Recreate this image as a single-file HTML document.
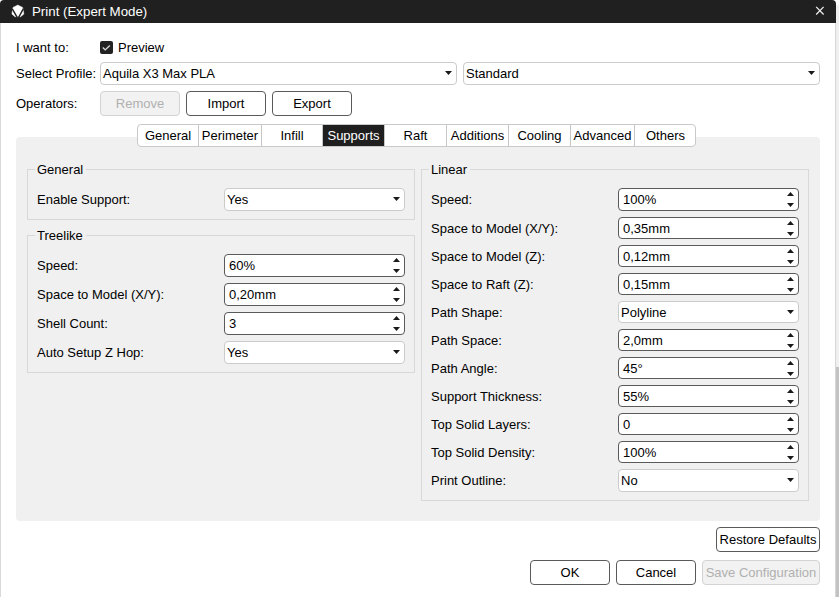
<!DOCTYPE html>
<html><head><meta charset="utf-8"><style>
html,body{margin:0;padding:0;width:839px;height:597px;overflow:hidden;background:#ffffff;position:relative;font-family:"Liberation Sans", sans-serif;font-size:13px}
.t{position:absolute;white-space:pre;font-family:"Liberation Sans", sans-serif}
</style></head><body>
<div style="position:absolute;left:835px;top:0px;width:4px;height:597px;box-sizing:border-box;background:#efefef"></div>
<div style="position:absolute;left:835px;top:0px;width:4px;height:5px;box-sizing:border-box;background:#ffffff"></div>
<div style="position:absolute;left:836px;top:367px;width:3px;height:230px;box-sizing:border-box;background:#c3c3c3"></div>
<div style="position:absolute;left:0px;top:23px;width:836px;height:574px;box-sizing:border-box;background:#fff;border-left:1px solid #d9d9d9;border-right:1px solid #d6d6d6"></div>
<div style="position:absolute;left:0px;top:0px;width:836px;height:23px;box-sizing:border-box;background:#202020;border-radius:4px 4px 0 0"></div>
<svg style="position:absolute;left:8px;top:2px" width="20" height="18" viewBox="0 0 20 18"><path d="M9.8 3.1 L14.6 5.4 L15.9 12 L12.6 14.7 L7 14.7 L3.9 12 L5 5.4 Z" fill="#fff" stroke="#fff" stroke-width="0.5" stroke-linejoin="round"/><path d="M4.3 6.9 L9.3 15.6 M15.3 6.9 L10.5 15.6" fill="none" stroke="#202020" stroke-width="1.4"/></svg>
<div class="t" style="left:32px;top:2.09px;height:20px;line-height:20px;font-size:13.3px;color:#fff;">Print (Expert Mode)</div>
<svg style="position:absolute;left:815px;top:6px" width="10" height="10" viewBox="0 0 10 10"><path d="M1.2 0.9L8.6 8.5M8.6 0.9L1.2 8.5" stroke="#ececec" stroke-width="1.3"/></svg>
<div class="t" style="left:16px;top:37.80px;height:20px;line-height:20px;font-size:13px;color:#000;">I want to:</div>
<div style="position:absolute;left:100px;top:41px;width:13px;height:13px;box-sizing:border-box;background:#222;border-radius:2px"></div>
<svg style="position:absolute;left:100px;top:41px" width="13" height="13" viewBox="0 0 13 13"><path d="M2.8 6.6L5.2 8.9L9.8 4.5" fill="none" stroke="#d8d8d8" stroke-width="1.4"/></svg>
<div class="t" style="left:118px;top:37.50px;height:20px;line-height:20px;font-size:13px;color:#000;">Preview</div>
<div class="t" style="left:16px;top:63.50px;height:20px;line-height:20px;font-size:13px;color:#000;">Select Profile:</div>
<div style="position:absolute;left:100px;top:62px;width:357px;height:23px;box-sizing:border-box;background:#fff;border:1px solid #cbcbcb;border-radius:4px"></div><div class="t" style="left:103px;top:63.50px;height:20px;line-height:20px;font-size:13px;color:#000;">Aquila X3 Max PLA</div><svg style="position:absolute;left:444.50px;top:71.00px" width="7" height="4"><path d="M0 0H7L3.5 4Z" fill="#1a1a1a"/></svg>
<div style="position:absolute;left:463px;top:62px;width:357px;height:23px;box-sizing:border-box;background:#fff;border:1px solid #cbcbcb;border-radius:4px"></div><div class="t" style="left:466px;top:63.50px;height:20px;line-height:20px;font-size:13px;color:#000;">Standard</div><svg style="position:absolute;left:807.50px;top:71.00px" width="7" height="4"><path d="M0 0H7L3.5 4Z" fill="#1a1a1a"/></svg>
<div class="t" style="left:16px;top:94.10px;height:20px;line-height:20px;font-size:13px;color:#000;">Operators:</div>
<div style="position:absolute;left:100px;top:91px;width:80px;height:25px;box-sizing:border-box;background:#f2f2f2;border:1px solid #d3d3d3;border-radius:4px"></div><div class="t" style="left:100px;top:94.00px;width:80px;height:20px;line-height:20px;text-align:center;color:#b0b0b0">Remove</div>
<div style="position:absolute;left:186px;top:91px;width:80px;height:25px;box-sizing:border-box;background:#fff;border:1px solid #5a5a5a;border-radius:4px"></div><div class="t" style="left:186px;top:94.00px;width:80px;height:20px;line-height:20px;text-align:center;color:#000">Import</div>
<div style="position:absolute;left:272px;top:91px;width:80px;height:25px;box-sizing:border-box;background:#fff;border:1px solid #5a5a5a;border-radius:4px"></div><div class="t" style="left:272px;top:94.00px;width:80px;height:20px;line-height:20px;text-align:center;color:#000">Export</div>
<div style="position:absolute;left:16px;top:137px;width:804px;height:384px;box-sizing:border-box;background:#f0f0f0;border-radius:4px"></div>
<div style="position:absolute;left:137px;top:124px;width:559px;height:23px;box-sizing:border-box;background:#fff;border:1px solid #c9c9c9;border-radius:4px"></div>
<div class="t" style="left:138px;top:124.5px;width:60px;height:21px;line-height:21px;text-align:center;color:#000">General</div>
<div style="position:absolute;left:198px;top:125px;width:1px;height:21px;box-sizing:border-box;background:#c6c6c6"></div>
<div class="t" style="left:199px;top:124.5px;width:62px;height:21px;line-height:21px;text-align:center;color:#000">Perimeter</div>
<div style="position:absolute;left:261px;top:125px;width:1px;height:21px;box-sizing:border-box;background:#c6c6c6"></div>
<div class="t" style="left:262px;top:124.5px;width:60px;height:21px;line-height:21px;text-align:center;color:#000">Infill</div>
<div style="position:absolute;left:322px;top:125px;width:1px;height:21px;box-sizing:border-box;background:#c6c6c6"></div>
<div style="position:absolute;left:323px;top:125px;width:61px;height:21px;box-sizing:border-box;background:#1f1f1f"></div>
<div class="t" style="left:323px;top:124.5px;width:61px;height:21px;line-height:21px;text-align:center;color:#fff">Supports</div>
<div style="position:absolute;left:384px;top:125px;width:1px;height:21px;box-sizing:border-box;background:#c6c6c6"></div>
<div class="t" style="left:385px;top:124.5px;width:61px;height:21px;line-height:21px;text-align:center;color:#000">Raft</div>
<div style="position:absolute;left:446px;top:125px;width:1px;height:21px;box-sizing:border-box;background:#c6c6c6"></div>
<div class="t" style="left:447px;top:124.5px;width:61px;height:21px;line-height:21px;text-align:center;color:#000">Additions</div>
<div style="position:absolute;left:508px;top:125px;width:1px;height:21px;box-sizing:border-box;background:#c6c6c6"></div>
<div class="t" style="left:509px;top:124.5px;width:61px;height:21px;line-height:21px;text-align:center;color:#000">Cooling</div>
<div style="position:absolute;left:570px;top:125px;width:1px;height:21px;box-sizing:border-box;background:#c6c6c6"></div>
<div class="t" style="left:571px;top:124.5px;width:63px;height:21px;line-height:21px;text-align:center;color:#000">Advanced</div>
<div style="position:absolute;left:634px;top:125px;width:1px;height:21px;box-sizing:border-box;background:#c6c6c6"></div>
<div class="t" style="left:635px;top:124.5px;width:61px;height:21px;line-height:21px;text-align:center;color:#000">Others</div>
<div style="position:absolute;left:27px;top:169px;width:388px;height:51px;box-sizing:border-box;border:1px solid #d8d8d8"></div><div class="t" style="left:35px;top:159.50px;height:20px;line-height:20px;padding:0 3px 0 2px;background:#f0f0f0;color:#000">General</div>
<div style="position:absolute;left:27px;top:235px;width:388px;height:138px;box-sizing:border-box;border:1px solid #d8d8d8"></div><div class="t" style="left:35px;top:225.50px;height:20px;line-height:20px;padding:0 3px 0 2px;background:#f0f0f0;color:#000">Treelike</div>
<div style="position:absolute;left:421px;top:169px;width:388px;height:332px;box-sizing:border-box;border:1px solid #d8d8d8"></div><div class="t" style="left:429px;top:159.50px;height:20px;line-height:20px;padding:0 3px 0 2px;background:#f0f0f0;color:#000">Linear</div>
<div class="t" style="left:37px;top:189.50px;height:20px;line-height:20px;font-size:13px;color:#000;">Enable Support:</div>
<div style="position:absolute;left:224px;top:188px;width:181px;height:23px;box-sizing:border-box;background:#fff;border:1px solid #cbcbcb;border-radius:4px"></div><div class="t" style="left:227px;top:189.50px;height:20px;line-height:20px;font-size:13px;color:#000;">Yes</div><svg style="position:absolute;left:392.50px;top:197.00px" width="7" height="4"><path d="M0 0H7L3.5 4Z" fill="#1a1a1a"/></svg>
<div class="t" style="left:37px;top:255.50px;height:20px;line-height:20px;font-size:13px;color:#000;">Speed:</div>
<div style="position:absolute;left:224px;top:254px;width:181px;height:23px;box-sizing:border-box;background:#fff;border:1px solid #5a5a5a;border-radius:4px"></div><div class="t" style="left:229px;top:255.50px;height:20px;line-height:20px;font-size:13px;color:#000;">60%</div><svg style="position:absolute;left:393.00px;top:258.00px" width="7" height="4"><path d="M0 4H7L3.5 0Z" fill="#1a1a1a"/></svg><svg style="position:absolute;left:393.00px;top:269.00px" width="7" height="4"><path d="M0 0H7L3.5 4Z" fill="#1a1a1a"/></svg>
<div class="t" style="left:37px;top:284.50px;height:20px;line-height:20px;font-size:13px;color:#000;">Space to Model (X/Y):</div>
<div style="position:absolute;left:224px;top:283px;width:181px;height:23px;box-sizing:border-box;background:#fff;border:1px solid #5a5a5a;border-radius:4px"></div><div class="t" style="left:229px;top:284.50px;height:20px;line-height:20px;font-size:13px;color:#000;">0,20mm</div><svg style="position:absolute;left:393.00px;top:287.00px" width="7" height="4"><path d="M0 4H7L3.5 0Z" fill="#1a1a1a"/></svg><svg style="position:absolute;left:393.00px;top:298.00px" width="7" height="4"><path d="M0 0H7L3.5 4Z" fill="#1a1a1a"/></svg>
<div class="t" style="left:37px;top:313.50px;height:20px;line-height:20px;font-size:13px;color:#000;">Shell Count:</div>
<div style="position:absolute;left:224px;top:312px;width:181px;height:23px;box-sizing:border-box;background:#fff;border:1px solid #5a5a5a;border-radius:4px"></div><div class="t" style="left:229px;top:313.50px;height:20px;line-height:20px;font-size:13px;color:#000;">3</div><svg style="position:absolute;left:393.00px;top:316.00px" width="7" height="4"><path d="M0 4H7L3.5 0Z" fill="#1a1a1a"/></svg><svg style="position:absolute;left:393.00px;top:327.00px" width="7" height="4"><path d="M0 0H7L3.5 4Z" fill="#1a1a1a"/></svg>
<div class="t" style="left:37px;top:342.50px;height:20px;line-height:20px;font-size:13px;color:#000;">Auto Setup Z Hop:</div>
<div style="position:absolute;left:224px;top:341px;width:181px;height:23px;box-sizing:border-box;background:#fff;border:1px solid #cbcbcb;border-radius:4px"></div><div class="t" style="left:227px;top:342.50px;height:20px;line-height:20px;font-size:13px;color:#000;">Yes</div><svg style="position:absolute;left:392.50px;top:350.00px" width="7" height="4"><path d="M0 0H7L3.5 4Z" fill="#1a1a1a"/></svg>
<div class="t" style="left:431px;top:189.50px;height:20px;line-height:20px;font-size:13px;color:#000;">Speed:</div>
<div style="position:absolute;left:618px;top:188px;width:181px;height:23px;box-sizing:border-box;background:#fff;border:1px solid #5a5a5a;border-radius:4px"></div><div class="t" style="left:623px;top:189.50px;height:20px;line-height:20px;font-size:13px;color:#000;">100%</div><svg style="position:absolute;left:787.00px;top:192.00px" width="7" height="4"><path d="M0 4H7L3.5 0Z" fill="#1a1a1a"/></svg><svg style="position:absolute;left:787.00px;top:203.00px" width="7" height="4"><path d="M0 0H7L3.5 4Z" fill="#1a1a1a"/></svg>
<div class="t" style="left:431px;top:218.50px;height:20px;line-height:20px;font-size:13px;color:#000;">Space to Model (X/Y):</div>
<div style="position:absolute;left:618px;top:217px;width:181px;height:22px;box-sizing:border-box;background:#fff;border:1px solid #5a5a5a;border-radius:4px"></div><div class="t" style="left:623px;top:218.50px;height:20px;line-height:20px;font-size:13px;color:#000;">0,35mm</div><svg style="position:absolute;left:787.00px;top:220.50px" width="7" height="4"><path d="M0 4H7L3.5 0Z" fill="#1a1a1a"/></svg><svg style="position:absolute;left:787.00px;top:231.50px" width="7" height="4"><path d="M0 0H7L3.5 4Z" fill="#1a1a1a"/></svg>
<div class="t" style="left:431px;top:246.50px;height:20px;line-height:20px;font-size:13px;color:#000;">Space to Model (Z):</div>
<div style="position:absolute;left:618px;top:245px;width:181px;height:22px;box-sizing:border-box;background:#fff;border:1px solid #5a5a5a;border-radius:4px"></div><div class="t" style="left:623px;top:246.50px;height:20px;line-height:20px;font-size:13px;color:#000;">0,12mm</div><svg style="position:absolute;left:787.00px;top:248.50px" width="7" height="4"><path d="M0 4H7L3.5 0Z" fill="#1a1a1a"/></svg><svg style="position:absolute;left:787.00px;top:259.50px" width="7" height="4"><path d="M0 0H7L3.5 4Z" fill="#1a1a1a"/></svg>
<div class="t" style="left:431px;top:274.50px;height:20px;line-height:20px;font-size:13px;color:#000;">Space to Raft (Z):</div>
<div style="position:absolute;left:618px;top:273px;width:181px;height:22px;box-sizing:border-box;background:#fff;border:1px solid #5a5a5a;border-radius:4px"></div><div class="t" style="left:623px;top:274.50px;height:20px;line-height:20px;font-size:13px;color:#000;">0,15mm</div><svg style="position:absolute;left:787.00px;top:276.50px" width="7" height="4"><path d="M0 4H7L3.5 0Z" fill="#1a1a1a"/></svg><svg style="position:absolute;left:787.00px;top:287.50px" width="7" height="4"><path d="M0 0H7L3.5 4Z" fill="#1a1a1a"/></svg>
<div class="t" style="left:431px;top:302.50px;height:20px;line-height:20px;font-size:13px;color:#000;">Path Shape:</div>
<div style="position:absolute;left:618px;top:301px;width:181px;height:22px;box-sizing:border-box;background:#fff;border:1px solid #cbcbcb;border-radius:4px"></div><div class="t" style="left:621px;top:302.50px;height:20px;line-height:20px;font-size:13px;color:#000;">Polyline</div><svg style="position:absolute;left:786.50px;top:310.00px" width="7" height="4"><path d="M0 0H7L3.5 4Z" fill="#1a1a1a"/></svg>
<div class="t" style="left:431px;top:330.50px;height:20px;line-height:20px;font-size:13px;color:#000;">Path Space:</div>
<div style="position:absolute;left:618px;top:329px;width:181px;height:22px;box-sizing:border-box;background:#fff;border:1px solid #5a5a5a;border-radius:4px"></div><div class="t" style="left:623px;top:330.50px;height:20px;line-height:20px;font-size:13px;color:#000;">2,0mm</div><svg style="position:absolute;left:787.00px;top:332.50px" width="7" height="4"><path d="M0 4H7L3.5 0Z" fill="#1a1a1a"/></svg><svg style="position:absolute;left:787.00px;top:343.50px" width="7" height="4"><path d="M0 0H7L3.5 4Z" fill="#1a1a1a"/></svg>
<div class="t" style="left:431px;top:358.50px;height:20px;line-height:20px;font-size:13px;color:#000;">Path Angle:</div>
<div style="position:absolute;left:618px;top:357px;width:181px;height:22px;box-sizing:border-box;background:#fff;border:1px solid #5a5a5a;border-radius:4px"></div><div class="t" style="left:623px;top:358.50px;height:20px;line-height:20px;font-size:13px;color:#000;">45°</div><svg style="position:absolute;left:787.00px;top:360.50px" width="7" height="4"><path d="M0 4H7L3.5 0Z" fill="#1a1a1a"/></svg><svg style="position:absolute;left:787.00px;top:371.50px" width="7" height="4"><path d="M0 0H7L3.5 4Z" fill="#1a1a1a"/></svg>
<div class="t" style="left:431px;top:386.50px;height:20px;line-height:20px;font-size:13px;color:#000;">Support Thickness:</div>
<div style="position:absolute;left:618px;top:385px;width:181px;height:22px;box-sizing:border-box;background:#fff;border:1px solid #5a5a5a;border-radius:4px"></div><div class="t" style="left:623px;top:386.50px;height:20px;line-height:20px;font-size:13px;color:#000;">55%</div><svg style="position:absolute;left:787.00px;top:388.50px" width="7" height="4"><path d="M0 4H7L3.5 0Z" fill="#1a1a1a"/></svg><svg style="position:absolute;left:787.00px;top:399.50px" width="7" height="4"><path d="M0 0H7L3.5 4Z" fill="#1a1a1a"/></svg>
<div class="t" style="left:431px;top:414.50px;height:20px;line-height:20px;font-size:13px;color:#000;">Top Solid Layers:</div>
<div style="position:absolute;left:618px;top:413px;width:181px;height:22px;box-sizing:border-box;background:#fff;border:1px solid #5a5a5a;border-radius:4px"></div><div class="t" style="left:623px;top:414.50px;height:20px;line-height:20px;font-size:13px;color:#000;">0</div><svg style="position:absolute;left:787.00px;top:416.50px" width="7" height="4"><path d="M0 4H7L3.5 0Z" fill="#1a1a1a"/></svg><svg style="position:absolute;left:787.00px;top:427.50px" width="7" height="4"><path d="M0 0H7L3.5 4Z" fill="#1a1a1a"/></svg>
<div class="t" style="left:431px;top:442.50px;height:20px;line-height:20px;font-size:13px;color:#000;">Top Solid Density:</div>
<div style="position:absolute;left:618px;top:441px;width:181px;height:22px;box-sizing:border-box;background:#fff;border:1px solid #5a5a5a;border-radius:4px"></div><div class="t" style="left:623px;top:442.50px;height:20px;line-height:20px;font-size:13px;color:#000;">100%</div><svg style="position:absolute;left:787.00px;top:444.50px" width="7" height="4"><path d="M0 4H7L3.5 0Z" fill="#1a1a1a"/></svg><svg style="position:absolute;left:787.00px;top:455.50px" width="7" height="4"><path d="M0 0H7L3.5 4Z" fill="#1a1a1a"/></svg>
<div class="t" style="left:431px;top:470.50px;height:20px;line-height:20px;font-size:13px;color:#000;">Print Outline:</div>
<div style="position:absolute;left:618px;top:469px;width:181px;height:23px;box-sizing:border-box;background:#fff;border:1px solid #cbcbcb;border-radius:4px"></div><div class="t" style="left:621px;top:470.50px;height:20px;line-height:20px;font-size:13px;color:#000;">No</div><svg style="position:absolute;left:786.50px;top:478.00px" width="7" height="4"><path d="M0 0H7L3.5 4Z" fill="#1a1a1a"/></svg>
<div style="position:absolute;left:716px;top:527px;width:104px;height:25px;box-sizing:border-box;background:#fff;border:1px solid #5a5a5a;border-radius:4px"></div><div class="t" style="left:716px;top:530.00px;width:104px;height:20px;line-height:20px;text-align:center;color:#000">Restore Defaults</div>
<div style="position:absolute;left:530px;top:560px;width:80px;height:25px;box-sizing:border-box;background:#fff;border:1px solid #5a5a5a;border-radius:4px"></div><div class="t" style="left:530px;top:563.00px;width:80px;height:20px;line-height:20px;text-align:center;color:#000">OK</div>
<div style="position:absolute;left:616px;top:560px;width:80px;height:25px;box-sizing:border-box;background:#fff;border:1px solid #5a5a5a;border-radius:4px"></div><div class="t" style="left:616px;top:563.00px;width:80px;height:20px;line-height:20px;text-align:center;color:#000">Cancel</div>
<div style="position:absolute;left:702px;top:560px;width:118px;height:25px;box-sizing:border-box;background:#f2f2f2;border:1px solid #d3d3d3;border-radius:4px"></div><div class="t" style="left:702px;top:563.00px;width:118px;height:20px;line-height:20px;text-align:center;color:#b0b0b0">Save Configuration</div>
</body></html>
